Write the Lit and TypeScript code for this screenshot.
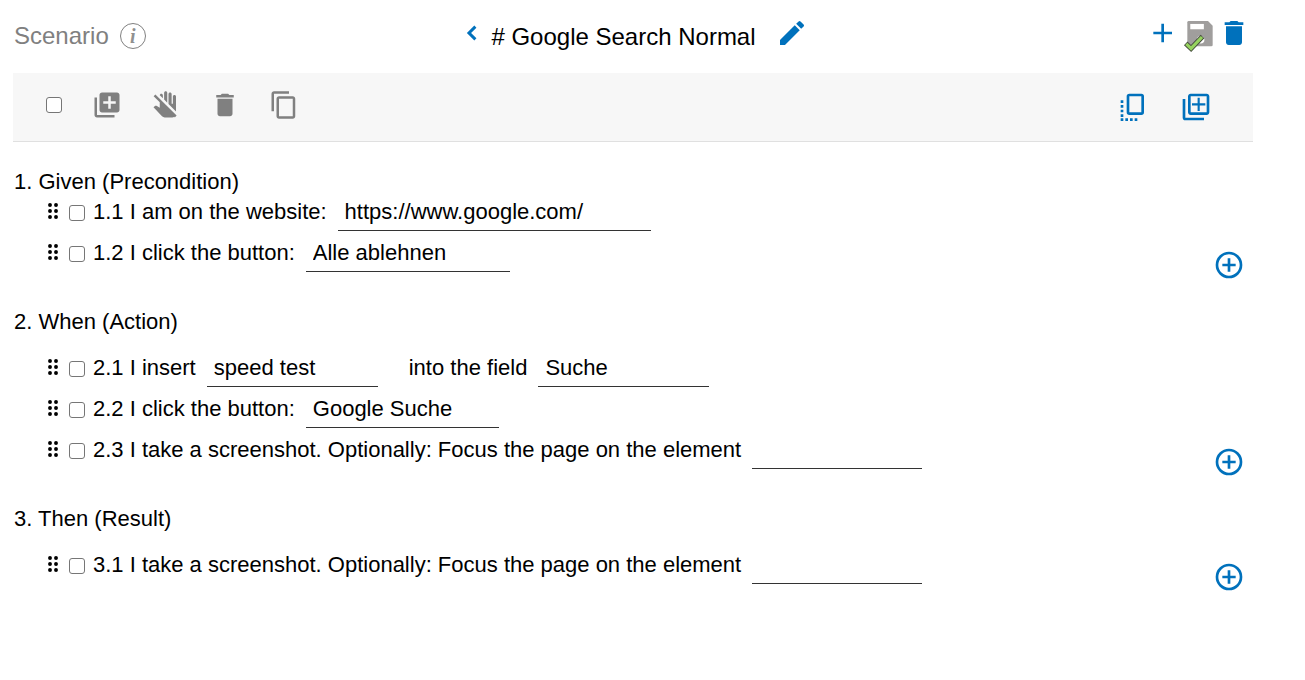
import { LitElement, html, css, svg } from "lit";
import { customElement, property, state } from "lit/decorators.js";

const ICONS: Record<string, unknown> = {
  back: svg`<path d="M15.800 7.400 14 5.600l-6.400 6.400 6.400 6.400 1.800-1.800L11.200 12z"/>`,
  edit: svg`<path d="M3 17.25V21h3.75L17.81 9.94l-3.75-3.75L3 17.25zM20.71 7.04a1 1 0 0 0 0-1.41l-2.34-2.34a1 1 0 0 0-1.41 0l-1.83 1.83 3.75 3.75 1.83-1.83z"/>`,
  add: svg`<path d="M19.500 13H13.500v6h-2v-6H5.500v-2h6V5h2v6h6z"/>`,
  trash: svg`<path d="M6 19c0 1.100.9 2 2 2h8c1.100 0 2-.9 2-2V7H6v12zM19 4h-3.500l-1-1h-5l-1 1H5v2h14V4z"/>`,
  save: svg`<path fill="#a09e9d" d="M5 3h14.500L23 6.500V21a1 1 0 0 1-1 1H5a1 1 0 0 1-1-1V4a1 1 0 0 1 1-1z"/><path fill="#fff" d="M6.200 5.200h10.200v4H6.200z"/><circle cx="14" cy="17" r="2.800" fill="#fff"/><path d="M2.800 19.800 6.800 23.600 15.400 14.600" fill="none" stroke="#454b3d" stroke-width="3.800"/><path d="M3.200 20.200 6.800 23.600 15 15" fill="none" stroke="#96d35f" stroke-width="2.400"/>`,
  libraryAdd: svg`<path d="M4 6H2v14c0 1.100.9 2 2 2h14v-2H4V6zm16-4H8c-1.100 0-2 .9-2 2v12c0 1.100.9 2 2 2h12c1.100 0 2-.9 2-2V4c0-1.100-.9-2-2-2zm-1 9h-4v4h-2v-4H9V9h4V5h2v4h4v2z"/>`,
  noTouch: svg`<path d="M13 10.170l-2.500-2.500V2.250C10.500 1.560 11.060 1 11.750 1S13 1.560 13 2.250v7.920zM20 12.750V5.250C20 4.560 19.440 4 18.750 4S17.500 4.560 17.500 5.250V11h-1V3.250C16.500 2.560 15.940 2 15.250 2S14 2.560 14 3.250v7.920l6 6v-4.420zM9.500 4.250C9.500 3.560 8.940 3 8.250 3c-.67 0-1.200.53-1.240 1.180L9.500 6.670V4.250zM20.490 20.490 3.510 3.510 2.100 4.920 7 9.830v4.300l-2.600-1.480c-.17-.09-.34-.14-.54-.14-.26 0-.5.09-.7.26L2 13.880l6.800 7.180c.57.6 1.350.94 2.180.94H17c.62 0 1.180-.19 1.650-.52l.43.43 1.410-1.420z"/>`,
  copy: svg`<path d="M16 1H4c-1.100 0-2 .9-2 2v14h2V3h12V1zm3 4H8c-1.100 0-2 .9-2 2v14c0 1.100.9 2 2 2h11c1.100 0 2-.9 2-2V7c0-1.100-.9-2-2-2zm0 16H8V7h11v14z"/>`,
  dashedCopy: svg`<path fill-rule="evenodd" d="M10 2h9a2 2 0 0 1 2 2v12a2 2 0 0 1-2 2h-9a2 2 0 0 1-2-2V4a2 2 0 0 1 2-2zm0 2v12h9V4h-9zM3.500 7h2v2h-2zM3.500 10.500h2v2h-2zM3.500 14h2v2h-2zM3.500 17.500h2v2h-2zM3.500 20.500h2v2h-2zM7 20.500h2v2h-2zM10.500 20.500h2v2h-2zM14 20.500h2v2h-2z"/>`,
  libraryAddOutline: svg`<path d="M4 6H2v14c0 1.100.9 2 2 2h14v-2H4V6zm16-4H8c-1.100 0-2 .9-2 2v12c0 1.100.9 2 2 2h12c1.100 0 2-.9 2-2V4c0-1.100-.9-2-2-2zm0 14H8V4h12v12zm-6.800-1h1.600v-4.200H19V9.200h-4.200V5h-1.600v4.200H9v1.600h4.200z"/>`,
  addCircle: svg`<path d="M13 7h-2v4H7v2h4v4h2v-4h4v-2h-4V7zm-1-5a10 10 0 1 0 0 20 10 10 0 0 0 0-20zm0 18a8 8 0 1 1 0-16 8 8 0 0 1 0 16z"/>`,
  grip: svg`<circle cx="8" cy="4" r="2.600"/><circle cx="16" cy="4" r="2.600"/><circle cx="8" cy="12" r="2.600"/><circle cx="16" cy="12" r="2.600"/><circle cx="8" cy="20" r="2.600"/><circle cx="16" cy="20" r="2.600"/>`,
};

const icon = (name: string, size: number) =>
  html`<svg width=${size} height=${size} viewBox="0 0 24 24" fill="currentColor" aria-hidden="true">${ICONS[name]}</svg>`;

type Part = string | { value: string; width: number; label: string };
interface Section {
  title: string;
  spaced: boolean;
  steps: Part[][];
}

const SCREENSHOT = "I take a screenshot. Optionally: Focus the page on the element";

const SECTIONS: Section[] = [
  {
    title: "Given (Precondition)",
    spaced: false,
    steps: [
      ["I am on the website:", { value: "https://www.google.com/", width: 313, label: "Website" }],
      ["I click the button:", { value: "Alle ablehnen", width: 204, label: "Button" }],
    ],
  },
  {
    title: "When (Action)",
    spaced: true,
    steps: [
      [
        "I insert",
        { value: "speed test", width: 171, label: "Text" },
        "into the field",
        { value: "Suche", width: 171, label: "Field" },
      ],
      ["I click the button:", { value: "Google Suche", width: 193, label: "Button" }],
      [SCREENSHOT, { value: "", width: 170, label: "Element" }],
    ],
  },
  {
    title: "Then (Result)",
    spaced: true,
    steps: [[SCREENSHOT, { value: "", width: 170, label: "Element" }]],
  },
];

const controls = css`
  * {
    box-sizing: border-box;
  }
  button {
    display: inline-flex;
    flex: none;
    padding: 0;
    border: 0;
    background: none;
    color: inherit;
    cursor: pointer;
  }
  svg {
    display: block;
    flex: none;
    overflow: visible;
  }
  .check {
    appearance: none;
    flex: none;
    width: 16px;
    height: 16px;
    margin: 0;
    border: 1px solid #767676;
    border-radius: 3px;
    background: #fff;
  }
  .check:checked {
    background: #0071bc;
  }
`;

@customElement("step-section")
class StepSection extends LitElement {
  @property({ attribute: false }) section!: Section;
  @property({ type: Number }) index = 1;

  static styles = [
    controls,
    css`
      :host {
        display: block;
      }
      .title {
        margin: 0;
        font-size: 22px;
        font-weight: 400;
        line-height: 20px;
      }
      .body {
        display: flex;
        align-items: flex-end;
        padding-right: 8px;
      }
      .body.spaced {
        padding-top: 16px;
      }
      .steps {
        flex: 1;
        min-width: 0;
        margin: 0;
        padding: 0 0 7px 30px;
        list-style: none;
      }
      .step {
        display: flex;
        align-items: center;
        height: 41px;
        white-space: nowrap;
      }
      .grip {
        padding-bottom: 4px;
        cursor: grab;
      }
      .check {
        margin: 0 8px 0 7px;
      }
      .label {
        padding-bottom: 2px;
      }
      .field {
        height: 37px;
        margin: 0 31px 0 11px;
        padding: 0 7px;
        border: 0;
        border-bottom: 1px solid #333;
        border-radius: 0;
        outline: 0;
        background: none;
        color: #000;
        font: inherit;
      }
      .add {
        color: #0071bc;
      }
    `,
  ];

  render() {
    const { title, spaced, steps } = this.section;
    return html`
      <h2 class="title">${this.index}. ${title}</h2>
      <div class="body ${spaced ? "spaced" : ""}">
        <ul class="steps">
          ${steps.map((parts, i) => this.renderStep(parts, `${this.index}.${i + 1}`))}
        </ul>
        <button class="add" aria-label="Add step">${icon("addCircle", 32)}</button>
      </div>
    `;
  }

  private renderStep(parts: Part[], number: string) {
    return html`<li class="step">
      <span class="grip">${icon("grip", 18)}</span>
      <input class="check" type="checkbox" id="step-${number}" />
      ${parts.map((part, i) =>
        typeof part === "string"
          ? html`<label class="label" for="step-${number}">${i === 0 ? `${number} ` : ""}${part}</label>`
          : html`<input class="field" type="text" aria-label=${part.label} .value=${part.value} style="width:${part.width}px" />`
      )}
    </li>`;
  }
}

@customElement("app-root")
class AppRoot extends LitElement {
  @state() private sections = SECTIONS;

  static styles = [
    controls,
    css`
      :host {
        display: block;
        padding: 0 52px 24px 13px;
        background: #fff;
        color: #000;
        font-family: "Liberation Sans", Arial, sans-serif;
        font-size: 22px;
        line-height: 26px;
      }
      .header {
        display: grid;
        grid-template-columns: 1fr auto 1fr;
        align-items: center;
        height: 73px;
        font-size: 24px;
      }
      .name {
        display: flex;
        align-items: center;
        gap: 11px;
        padding: 0 0 2px 1px;
        color: #808080;
      }
      .info {
        align-items: center;
        justify-content: center;
        width: 26px;
        height: 26px;
        border: 1px solid #808080;
        border-radius: 50%;
        color: #909090;
        font: italic 700 20px/20px "Liberation Serif", serif;
      }
      .middle {
        display: flex;
        align-items: center;
      }
      .title {
        margin: 0 20px 0 5px;
        font-size: 24px;
        font-weight: 400;
        line-height: 28px;
      }
      .blue {
        color: #0071bc;
      }
      .raised {
        padding-bottom: 7px;
      }
      .actions {
        display: flex;
        align-items: center;
        justify-content: flex-end;
        gap: 4px;
        padding: 0 3px 7px 0;
      }
      .toolbar {
        display: flex;
        align-items: center;
        gap: 29px;
        height: 69px;
        padding: 0 41px 4px 33px;
        border-bottom: 1px solid #e0e0e0;
        background: #f7f7f7;
        color: #808080;
      }
      .all {
        margin-right: 1px;
      }
      .right {
        display: flex;
        gap: 32px;
        margin-left: auto;
        padding-top: 4px;
      }
      .sections {
        display: flex;
        flex-direction: column;
        gap: 31px;
        padding: 30px 0 0 1px;
      }
    `,
  ];

  render() {
    return html`
      <header class="header">
        <div class="name">Scenario <button class="info" aria-label="Scenario information">i</button></div>
        <div class="middle">
          <button class="blue raised" aria-label="Back">${icon("back", 28)}</button>
          <h1 class="title"># Google Search Normal</h1>
          <button class="blue raised" aria-label="Rename">${icon("edit", 32)}</button>
        </div>
        <div class="actions blue">
          <button aria-label="New scenario">${icon("add", 32)}</button>
          <button aria-label="Save">${icon("save", 32)}</button>
          <button aria-label="Delete scenario">${icon("trash", 32)}</button>
        </div>
      </header>
      <div class="toolbar" role="toolbar" aria-label="Step actions">
        <input class="check all" type="checkbox" aria-label="Select all steps" />
        <button aria-label="Add to block">${icon("libraryAdd", 30)}</button>
        <button aria-label="Deactivate">${icon("noTouch", 30)}</button>
        <button aria-label="Delete steps">${icon("trash", 30)}</button>
        <button aria-label="Copy steps">${icon("copy", 30)}</button>
        <div class="right blue">
          <button aria-label="Insert block as reference">${icon("dashedCopy", 32)}</button>
          <button aria-label="Add block">${icon("libraryAddOutline", 32)}</button>
        </div>
      </div>
      <main class="sections">
        ${this.sections.map((s, i) => html`<step-section .section=${s} .index=${i + 1}></step-section>`)}
      </main>
    `;
  }
}
